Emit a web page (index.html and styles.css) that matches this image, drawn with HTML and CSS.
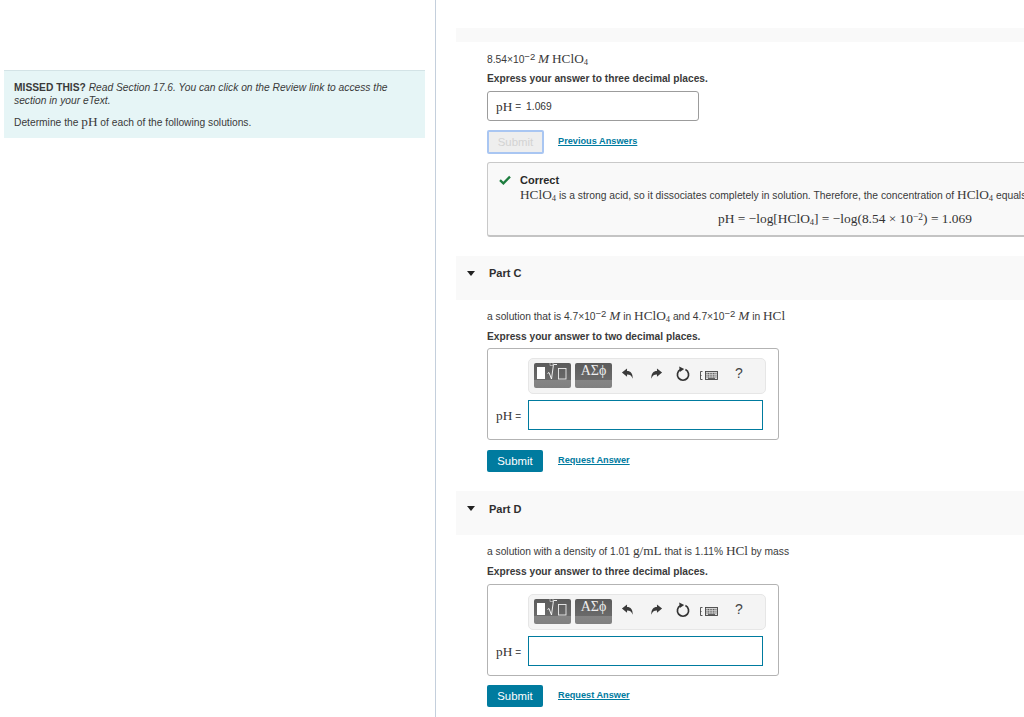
FILE: index.html
```html
<!DOCTYPE html>
<html lang="en">
<head>
<meta charset="utf-8">
<title>Determine the pH</title>
<link rel="stylesheet" href="styles.css">
</head>
<body>
<svg class="defs" width="0" height="0" aria-hidden="true">
  <symbol id="i-undo" viewBox="0 0 14 14"><path d="M1 6 L6.5 1.5 V4.3 C10.5 4.3 12.8 7 12.6 12.6 C11.6 9.6 10 8 6.5 8 V10.6 Z" fill="#3a3a3a"/></symbol>
  <symbol id="i-redo" viewBox="0 0 14 14"><path d="M13 6 L7.5 1.5 V4.3 C3.5 4.3 1.2 7 1.4 12.6 C2.4 9.6 4 8 7.5 8 V10.6 Z" fill="#3a3a3a"/></symbol>
  <symbol id="i-reset" viewBox="0 0 16 16"><path d="M5.6 3.6 A5.6 5.6 0 1 0 10.4 3.6" fill="none" stroke="#333" stroke-width="1.7"/><path d="M4.2 0.6 L9.2 3 L4.8 6 Z" fill="#333"/></symbol>
  <symbol id="i-keys" viewBox="0 0 18 9"><path d="M2.5 0.5 H0.5 V8.5 H2.5 M0.5 4.5 H1.5" fill="none" stroke="#444" stroke-width="0.9"/><rect x="5.5" y="0.5" width="12" height="8" fill="#ddd" stroke="#444" stroke-width="0.9"/><path d="M6.5 2.4 H16.5 M6.5 4.2 H16.5 M6.5 6 H16.5" stroke="#444" stroke-width="1" stroke-dasharray="1 0.6"/><path d="M8 7.4 H15" stroke="#444" stroke-width="0.9"/></symbol>
  <symbol id="i-tpl" viewBox="0 0 37 25"><rect x="3" y="4" width="8" height="12" fill="#fff"/><path d="M13.5 10.5 L15 9.5 L17.5 16 L19.5 1.5 H23" fill="none" stroke="#fff" stroke-width="0.9"/><path d="M16 -1 h3 v3.5 h-3 z" fill="none" stroke="#ccc" stroke-width="0.7"/><rect x="24.5" y="5.5" width="7.5" height="10.5" fill="none" stroke="#eee" stroke-width="0.9"/></symbol>
</svg>

<aside class="side">
  <div class="notice">
    <p class="notice-hint"><b>MISSED THIS?</b> <i>Read Section 17.6. You can click on the Review link to access the section in your eText.</i></p>
    <p class="notice-task">Determine the <span class="m">pH</span> of each of the following solutions.</p>
  </div>
</aside>

<main class="main">
  <div class="band band-top"></div>
  <section class="part part-first">
    <p class="q">8.54×10<sup>−2</sup> <i class="m">M</i> <span class="m">HClO<sub>4</sub></span></p>
    <p class="hint">Express your answer to three decimal places.</p>
    <div class="answered"><span class="m lab">pH</span><span class="eq">=</span><span class="val">1.069</span></div>
    <div class="actions actions-done">
      <button class="btn btn-off" type="button">Submit</button>
      <a class="link" href="#">Previous Answers</a>
    </div>
    <div class="feedback">
      <svg class="check" viewBox="0 0 12 10" width="12" height="10"><path d="M1 5.2 L4.4 8.4 L11 1.6" fill="none" stroke="#1d7d3f" stroke-width="2.3"/></svg>
      <div class="fb-body">
        <div class="fb-title">Correct</div>
        <div class="fb-text"><span class="m">HClO<sub>4</sub></span> is a strong acid, so it dissociates completely in solution. Therefore, the concentration of <span class="m">HClO<sub>4</sub></span> equals</div>
        <div class="fb-eq m">pH = −log[HClO<sub>4</sub>] = −log(8.54 × 10<sup>−2</sup>) = 1.069</div>
      </div>
    </div>
  </section>

  <header class="band band-part"><span class="tri"></span><h2>Part C</h2></header>
  <section class="part">
    <p class="q">a solution that is 4.7×10<sup>−2</sup> <i class="m">M</i> in <span class="m">HClO<sub>4</sub></span> and 4.7×10<sup>−2</sup> <i class="m">M</i> in <span class="m">HCl</span></p>
    <p class="hint">Express your answer to two decimal places.</p>
    <div class="editor">
      <div class="toolbar">
        <span class="tbtn"><svg class="tpl"><use href="#i-tpl"/></svg></span>
        <span class="tbtn tbtn-g">ΑΣϕ</span>
        <svg class="ic ic-undo"><use href="#i-undo"/></svg>
        <svg class="ic ic-redo"><use href="#i-redo"/></svg>
        <svg class="ic ic-reset"><use href="#i-reset"/></svg>
        <svg class="ic ic-keys"><use href="#i-keys"/></svg>
        <span class="help">?</span>
      </div>
      <div class="row"><span class="m lab">pH</span><span class="eq">=</span><div class="input"></div></div>
    </div>
    <div class="actions">
      <button class="btn" type="button">Submit</button>
      <a class="link" href="#">Request Answer</a>
    </div>
  </section>

  <header class="band band-part band-d"><span class="tri"></span><h2>Part D</h2></header>
  <section class="part part-d">
    <p class="q">a solution with a density of 1.01 <span class="m">g/mL</span> that is 1.11% <span class="m">HCl</span> by mass</p>
    <p class="hint">Express your answer to three decimal places.</p>
    <div class="editor">
      <div class="toolbar">
        <span class="tbtn"><svg class="tpl"><use href="#i-tpl"/></svg></span>
        <span class="tbtn tbtn-g">ΑΣϕ</span>
        <svg class="ic ic-undo"><use href="#i-undo"/></svg>
        <svg class="ic ic-redo"><use href="#i-redo"/></svg>
        <svg class="ic ic-reset"><use href="#i-reset"/></svg>
        <svg class="ic ic-keys"><use href="#i-keys"/></svg>
        <span class="help">?</span>
      </div>
      <div class="row"><span class="m lab">pH</span><span class="eq">=</span><div class="input"></div></div>
    </div>
    <div class="actions">
      <button class="btn" type="button">Submit</button>
      <a class="link" href="#">Request Answer</a>
    </div>
  </section>
</main>
</body>
</html>
```

FILE: styles.css
```css
* { box-sizing: border-box; }
html, body { height: 100%; }
body {
  margin: 0;
  display: flex;
  height: 717px;
  overflow: hidden;
  background: #fff;
  color: #333;
  font-family: "Liberation Sans", Arial, sans-serif;
  font-size: 11px;
}
p { margin: 0; }
.defs { position: absolute; }
.m { font-family: "Liberation Serif", "Times New Roman", serif; font-size: 13.3px; }
sub, sup { line-height: 0; }
sup { font-size: 9.5px; vertical-align: 3.5px; }
sub { font-size: 8.5px; vertical-align: -2px; }

.side {
  flex: 0 0 436px;
  border-right: 1px solid #c4cfdc;
  padding: 70px 10px 0 4px;
}
.notice {
  background: #e6f5f6;
  border-top: 1px solid #d3e3e6;
  height: 68px;
  padding: 11px 10px 0 10px;
  line-height: 12.5px;
  color: #3a3a3a;
  font-size: 10.25px;
}
.notice-task { margin-top: 9px; }

.main {
  flex: 0 0 588px;
  min-width: 0;
  overflow: hidden;
  padding: 28px 0 0 20px;
}
.band { background: #f9f9f9; }
.band-top { height: 14px; }
.band-part {
  height: 44px;
  display: flex;
  align-items: center;
  padding: 0 0 10px 11px;
  margin-top: 19px;
}
.band-d { padding-bottom: 9px; }
.band-part h2 {
  margin: 0 0 0 14px;
  font-size: 11px;
  font-weight: bold;
  color: #2f2f2f;
}
.tri {
  width: 0;
  height: 0;
  border-left: 4.5px solid transparent;
  border-right: 4.5px solid transparent;
  border-top: 5px solid #222;
}
.part { padding: 9px 0 0 31px; }
.part-first { padding-top: 10px; }
.q { height: 14px; line-height: 14px; font-size: 10.25px; white-space: nowrap; color: #3a3a3a; }
.hint { margin-top: 7px; height: 14px; line-height: 14px; font-weight: bold; font-size: 10.2px; color: #3a3a3a; }
.part-first .hint { margin-top: 6px; }
.part-d .editor { margin-top: 5px; }
.part-d .hint { margin-top: 7px; }
.part-d .actions { margin-top: 9px; }

.answered {
  margin-top: 5px;
  width: 212px;
  height: 30px;
  border: 1px solid #9c9c9c;
  border-radius: 3px;
  display: flex;
  align-items: center;
  padding: 1px 0 0 8px;
}
.lab { color: #333; }
.eq { font-size: 10px; margin: 0 5px 0 3px; color: #555; }
.val { font-size: 10.25px; color: #333; }

.actions { display: flex; align-items: center; margin-top: 10px; height: 22px; }
.actions-done { margin-top: 9px; height: 24px; }
.btn {
  width: 56px;
  height: 22px;
  padding: 0 0 1px;
  border: 0;
  border-radius: 2px;
  background: #007b9f;
  color: #fff;
  font: 11.4px "Liberation Sans", Arial, sans-serif;
  margin-right: 15px;
}
.btn-off {
  width: 57px;
  height: 24px;
  background: #eeeeee;
  color: #d3d3d3;
  border: 2px solid #a9c6f2;
  margin-right: 14px;
}
.link {
  color: #007b9f;
  font-weight: bold;
  font-size: 9.2px;
  text-decoration: underline;
  padding-bottom: 3px;
}

.feedback {
  margin-top: 8px;
  width: 716px;
  height: 75px;
  background: #f9f9f9;
  border: 1px solid #c9c9c9;
  border-bottom: 2px solid #c4c4c4;
  border-radius: 3px;
  display: flex;
  padding: 10px 0 0 11px;
}
.check { flex: none; margin: 2px 9px 0 0; }
.fb-body { flex: 1; min-width: 0; }
.fb-title { font-weight: bold; height: 14px; line-height: 14px; color: #2a2a2a; }
.fb-text { height: 14px; line-height: 15px; font-size: 10.3px; white-space: nowrap; color: #3a3a3a; }
.fb-eq { margin: 11px 0 0 -32px; text-align: center; font-size: 13.4px; line-height: 14px; }

.editor {
  margin-top: 4px;
  width: 292px;
  height: 92px;
  border: 1px solid #b3b3b3;
  border-radius: 3px;
  padding: 9px 0 0 8px;
}
.toolbar {
  margin-left: 32px;
  width: 238px;
  height: 36px;
  background: #f4f4f4;
  border: 1px solid #e6e6e6;
  border-radius: 5px;
  display: flex;
  align-items: flex-start;
  padding: 4px 0 0 5px;
  position: relative;
}
.tbtn {
  width: 37px;
  height: 25px;
  margin-right: 4px;
  border-radius: 2px;
  background: linear-gradient(#5b5b5b 0, #6a6a6a 17px, #858585 17px, #808080 100%);
  color: #eee;
  display: block;
  flex: none;
}
.tbtn-g {
  font-family: "Liberation Serif", "Times New Roman", serif;
  font-size: 14px;
  line-height: 15px;
  text-align: center;
}
.tpl { display: block; width: 37px; height: 25px; overflow: visible; }
.ic { position: absolute; }
.ic-undo { left: 92px; top: 8px; width: 13px; height: 13px; }
.ic-redo { left: 121px; top: 8px; width: 13px; height: 13px; }
.ic-reset { left: 146px; top: 7px; width: 16px; height: 16px; }
.ic-keys { left: 171px; top: 12px; width: 18px; height: 9px; }
.help { position: absolute; left: 206px; top: 7px; font-size: 14px; line-height: 15px; color: #444; }

.row { display: flex; align-items: center; margin-top: 6px; width: 267px; }
.row .lab, .row .eq { padding-top: 2px; }
.input {
  width: 235px;
  height: 30px;
  border: 1px solid #007b9f;
  background: #fff;
  margin-left: auto;
}
```
